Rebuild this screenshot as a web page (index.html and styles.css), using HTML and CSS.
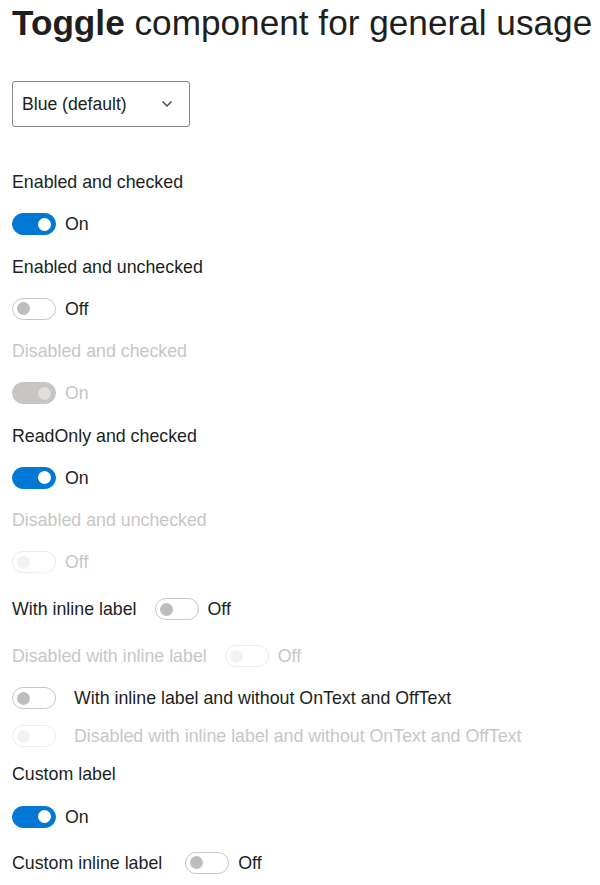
FILE: index.html
```html
<!DOCTYPE html>
<html>
<head>
<meta charset="utf-8">
<link rel="stylesheet" href="styles.css">
</head>
<body>
<div class="page">
  <h1 class="title"><b>Toggle</b> component for general usage</h1>
  <div class="dropdown">
    <span class="dd-text">Blue (default)</span>
    <svg class="chev" width="12" height="8" viewBox="0 0 12 8"><path d="M1.5 1.5 L6 6 L10.5 1.5" fill="none" stroke="#4a4a4a" stroke-width="1.5"/></svg>
  </div>

  <div class="field f-first">
    <div class="label">Enabled and checked</div>
    <div class="toggle"><span class="pill on"><span class="knob"></span></span><span class="state">On</span></div>
  </div>
  <div class="field">
    <div class="label">Enabled and unchecked</div>
    <div class="toggle"><span class="pill off"><span class="knob"></span></span><span class="state">Off</span></div>
  </div>
  <div class="field disabled">
    <div class="label">Disabled and checked</div>
    <div class="toggle"><span class="pill on"><span class="knob"></span></span><span class="state">On</span></div>
  </div>
  <div class="field">
    <div class="label">ReadOnly and checked</div>
    <div class="toggle"><span class="pill on"><span class="knob"></span></span><span class="state">On</span></div>
  </div>
  <div class="field disabled">
    <div class="label">Disabled and unchecked</div>
    <div class="toggle"><span class="pill off"><span class="knob"></span></span><span class="state">Off</span></div>
  </div>

  <div class="inline i1">
    <span class="label">With inline label</span>
    <span class="pill off"><span class="knob"></span></span><span class="state">Off</span>
  </div>
  <div class="inline i2 disabled">
    <span class="label">Disabled with inline label</span>
    <span class="pill off"><span class="knob"></span></span><span class="state">Off</span>
  </div>
  <div class="inline rev i3">
    <span class="pill off"><span class="knob"></span></span>
    <span class="label">With inline label and without OnText and OffText</span>
  </div>
  <div class="inline rev i4 disabled">
    <span class="pill off"><span class="knob"></span></span>
    <span class="label">Disabled with inline label and without OnText and OffText</span>
  </div>

  <div class="field f-custom">
    <div class="label">Custom label</div>
    <div class="toggle"><span class="pill on"><span class="knob"></span></span><span class="state">On</span></div>
  </div>
  <div class="inline i5 custom">
    <span class="label">Custom inline label</span>
    <span class="pill off"><span class="knob"></span></span><span class="state">Off</span>
  </div>
</div>
</body>
</html>
```

FILE: styles.css
```css
html, body {
  margin: 0;
  padding: 0;
  background: #ffffff;
}
body {
  font-family: "Liberation Sans", Arial, sans-serif;
  color: #201f1e;
}
.page {
  padding: 0 12px;
  display: flex;
  flex-direction: column;
  align-items: flex-start;
}
.title {
  margin: 0;
  font-size: 35.2px;
  line-height: 46px;
  font-weight: normal;
  color: #201f1e;
  white-space: nowrap;
}
.title b {
  font-weight: bold;
}
.dropdown {
  margin-top: 35px;
  box-sizing: border-box;
  width: 178px;
  height: 46px;
  border: 1px solid #8a8886;
  border-radius: 3px;
  display: flex;
  align-items: center;
  justify-content: space-between;
  padding: 0 16px 0 9px;
}
.dd-text {
  font-size: 17.6px;
  color: #201f1e;
}
.chev {
  display: block;
}
.field {
  margin-top: 15.25px;
  display: flex;
  flex-direction: column;
  align-items: flex-start;
}
.field.f-first {
  margin-top: 39px;
}
.field.f-custom {
  margin-top: 6px;
}
.label {
  font-size: 17.8px;
  line-height: 32px;
  height: 32px;
  white-space: nowrap;
}
.toggle {
  margin-top: 15.25px;
  display: flex;
  align-items: center;
  height: 22px;
}
.state {
  font-size: 17.8px;
  line-height: 22px;
  margin-left: 9px;
}
.pill {
  box-sizing: border-box;
  width: 44px;
  height: 22px;
  border-radius: 11px;
  display: flex;
  align-items: center;
  padding: 0 4px;
  flex: none;
}
.knob {
  width: 13px;
  height: 13px;
  border-radius: 50%;
  display: block;
}
.pill.on {
  background: #0078d4;
  border: 1px solid #0078d4;
  justify-content: flex-end;
}
.pill.on .knob {
  background: #ffffff;
}
.pill.off {
  background: #ffffff;
  border: 1px solid #c8c6c4;
  justify-content: flex-start;
}
.pill.off .knob {
  background: #bdbdbd;
}
.disabled .label,
.disabled .state {
  color: #c8c6c4;
}
.disabled .pill.on {
  background: #c8c6c4;
  border-color: #c8c6c4;
}
.disabled .pill.on .knob {
  background: #e1dfdd;
}
.disabled .pill.off {
  border-color: #edebe9;
}
.disabled .pill.off .knob {
  background: #f3f2f1;
}
.inline {
  display: flex;
  align-items: center;
  height: 32px;
}
.inline .label {
  margin-right: 18px;
}
.inline.custom .label {
  margin-right: 23px;
}
.inline.rev .label {
  margin-right: 0;
  margin-left: 18px;
}
.i1 { margin-top: 20px; }
.i2 { margin-top: 15px; }
.i3 { margin-top: 10px; }
.i4 { margin-top: 6px; }
.i5 { margin-top: 19px; }
```
